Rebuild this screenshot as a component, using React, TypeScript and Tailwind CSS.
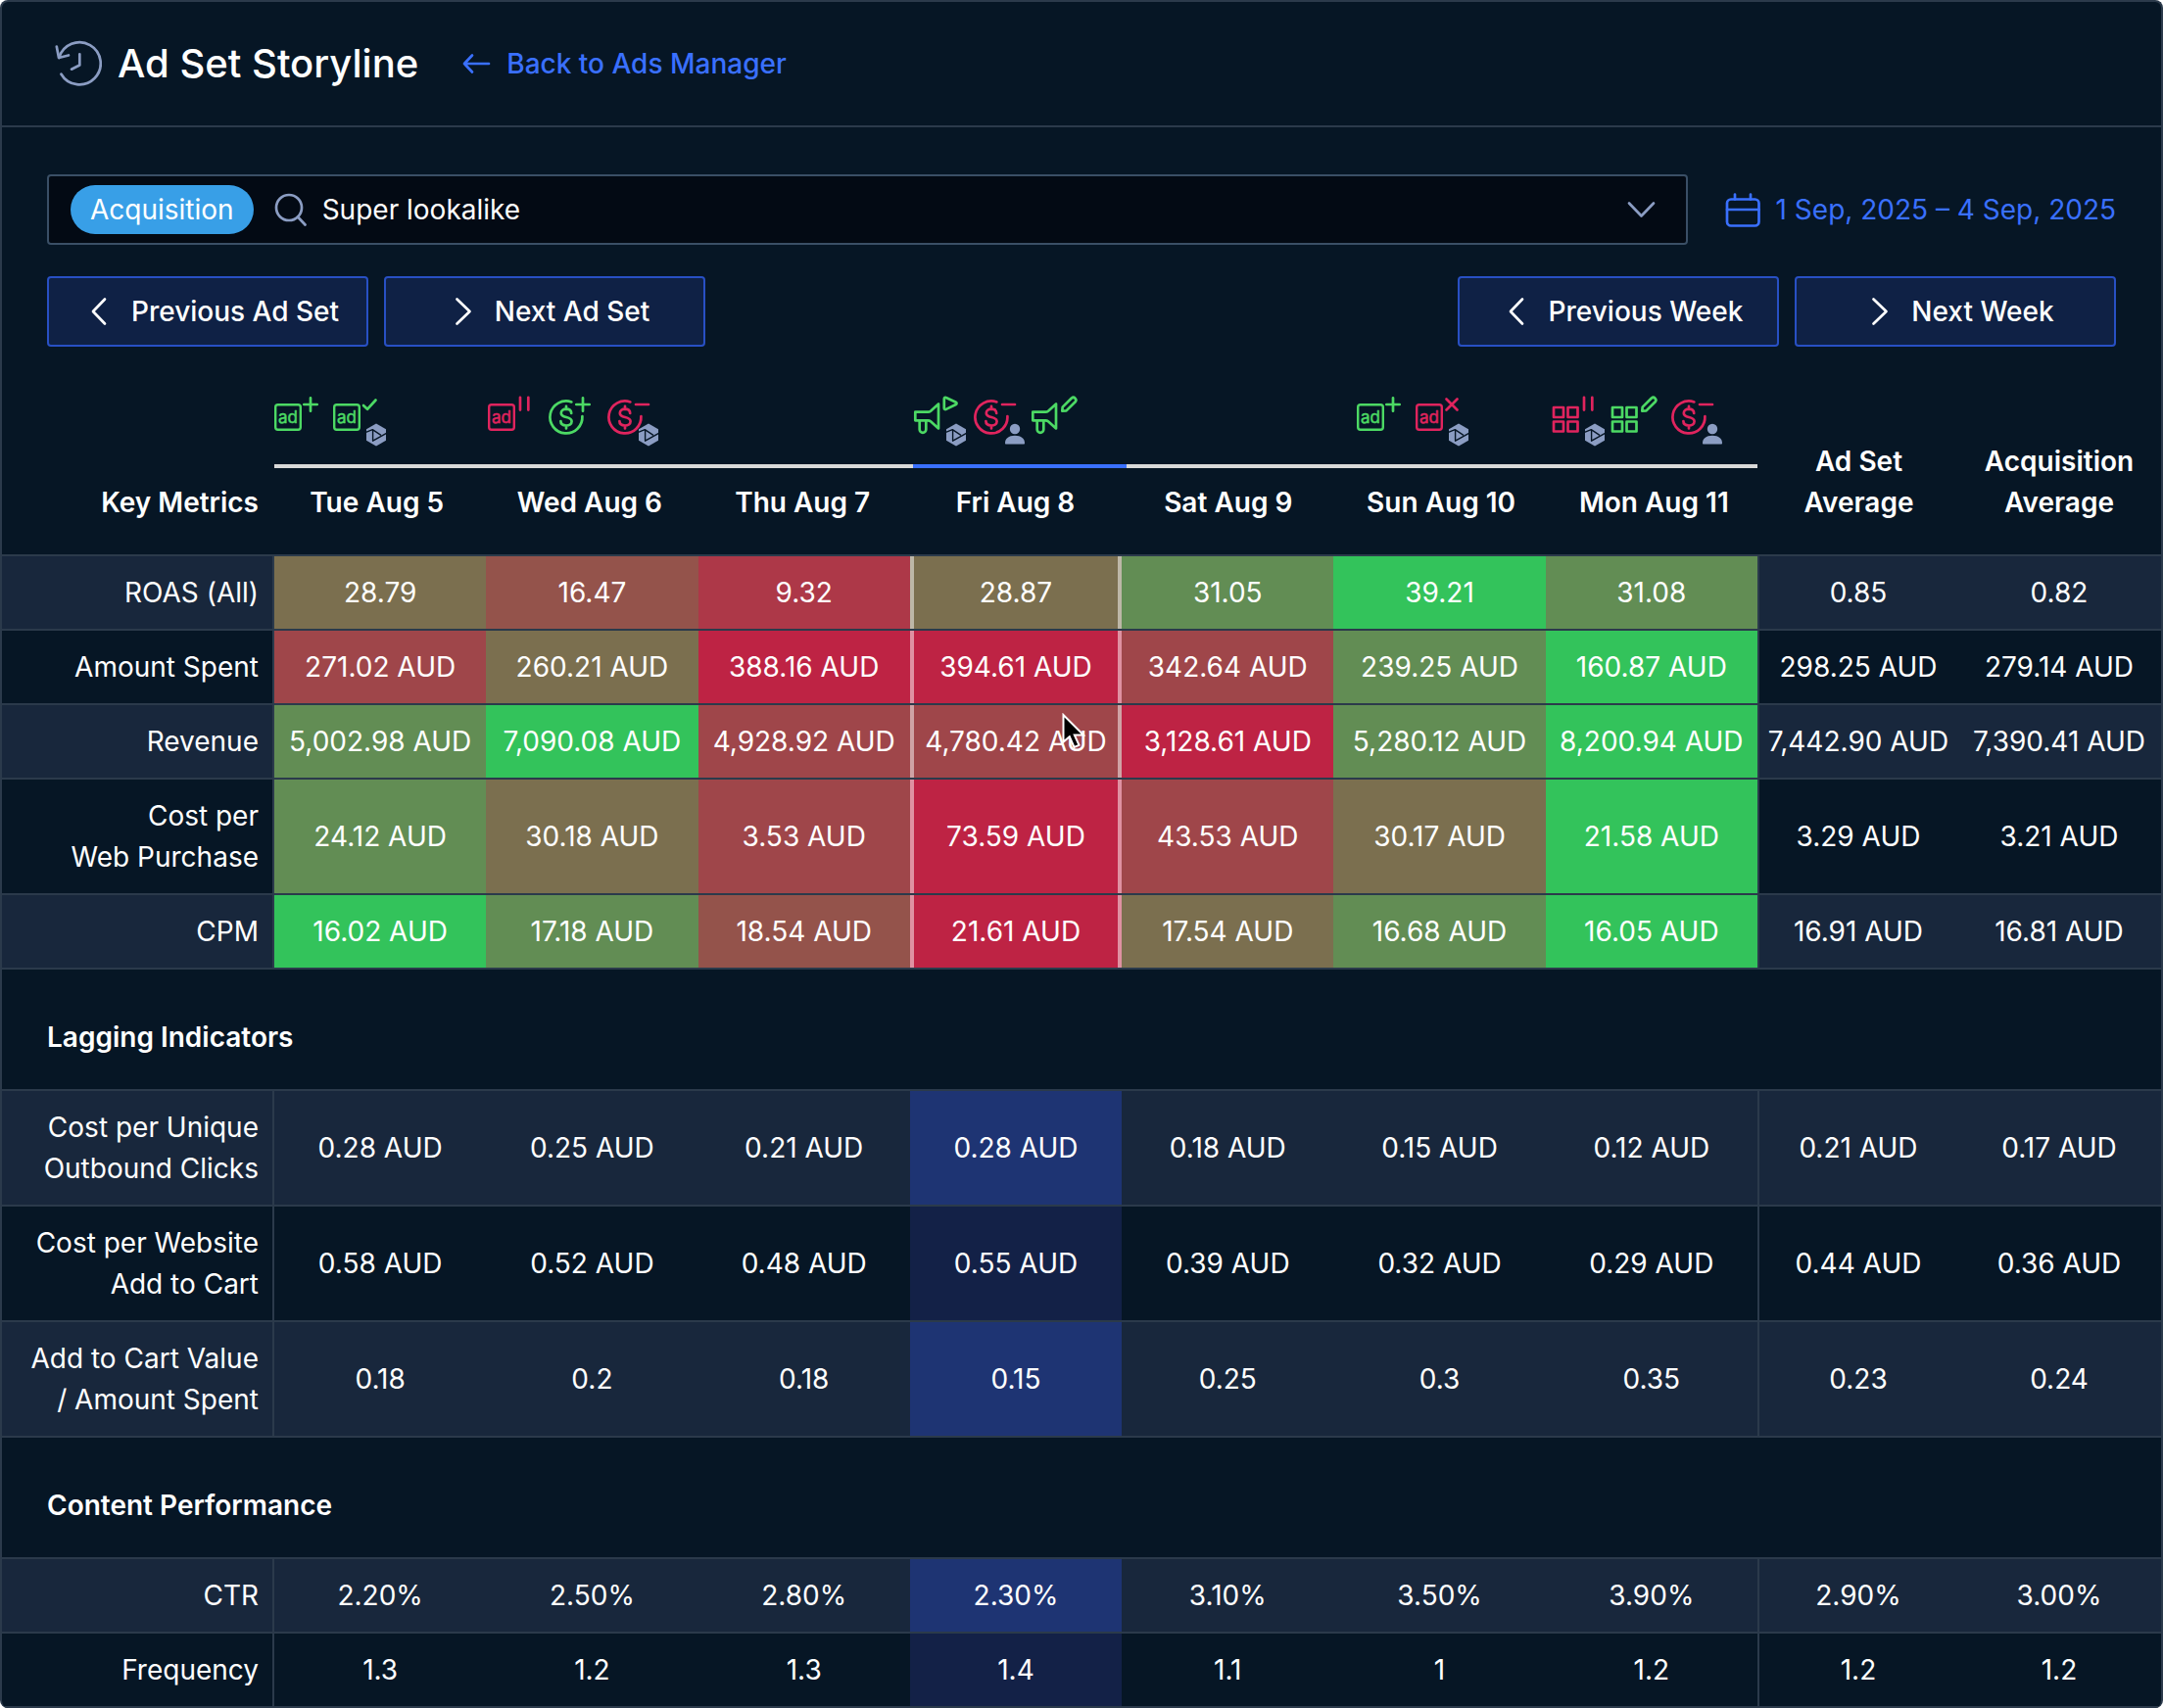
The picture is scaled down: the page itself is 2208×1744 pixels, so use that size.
import type { ReactNode } from "react";
import clsx from "clsx";

const SELECTED_DAY = 3;

const days = ["Tue Aug 5", "Wed Aug 6", "Thu Aug 7", "Fri Aug 8", "Sat Aug 9", "Sun Aug 10", "Mon Aug 11"];

type Shape = "ad" | "budget" | "campaign" | "creative";
type Action = "add" | "check" | "pause" | "remove" | "play" | "edit" | "cross";
type Author = "bot" | "person";
type Tone = "good" | "bad";

interface StoryEvent {
  shape: Shape;
  action: Action;
  tone: Tone;
  author?: Author;
}

const timeline: { events: StoryEvent[]; className?: string }[] = [
  {
    events: [
      { shape: "ad", action: "add", tone: "good" },
      { shape: "ad", action: "check", tone: "good", author: "bot" },
    ],
  },
  {
    events: [
      { shape: "ad", action: "pause", tone: "bad" },
      { shape: "budget", action: "add", tone: "good" },
      { shape: "budget", action: "remove", tone: "bad", author: "bot" },
    ],
  },
  { events: [] },
  {
    events: [
      { shape: "campaign", action: "play", tone: "good", author: "bot" },
      { shape: "budget", action: "remove", tone: "bad", author: "person" },
      { shape: "campaign", action: "edit", tone: "good" },
    ],
  },
  { events: [] },
  {
    className: "pl-5",
    events: [
      { shape: "ad", action: "add", tone: "good" },
      { shape: "ad", action: "cross", tone: "bad", author: "bot" },
    ],
  },
  {
    className: "pl-1",
    events: [
      { shape: "creative", action: "pause", tone: "bad", author: "bot" },
      { shape: "creative", action: "edit", tone: "good" },
      { shape: "budget", action: "remove", tone: "bad", author: "person" },
    ],
  },
];

// heat scale, from best to worst
const heat: Record<string, string> = {
  a: "bg-[#33c35b]",
  b: "bg-[#628d54]",
  c: "bg-[#7b6f4f]",
  d: "bg-[#94534b]",
  e: "bg-[#9f464a]",
  f: "bg-[#ad3848]",
  g: "bg-[#be2344]",
};

interface Metric {
  label: string[];
  values: string[];
  averages: string[];
  heat?: string;
}

const keyMetrics: Metric[] = [
  {
    label: ["ROAS (All)"],
    values: ["28.79", "16.47", "9.32", "28.87", "31.05", "39.21", "31.08"],
    averages: ["0.85", "0.82"],
    heat: "cdfcbab",
  },
  {
    label: ["Amount Spent"],
    values: ["271.02 AUD", "260.21 AUD", "388.16 AUD", "394.61 AUD", "342.64 AUD", "239.25 AUD", "160.87 AUD"],
    averages: ["298.25 AUD", "279.14 AUD"],
    heat: "ecggeba",
  },
  {
    label: ["Revenue"],
    values: [
      "5,002.98 AUD",
      "7,090.08 AUD",
      "4,928.92 AUD",
      "4,780.42 AUD",
      "3,128.61 AUD",
      "5,280.12 AUD",
      "8,200.94 AUD",
    ],
    averages: ["7,442.90 AUD", "7,390.41 AUD"],
    heat: "baeegba",
  },
  {
    label: ["Cost per", "Web Purchase"],
    values: ["24.12 AUD", "30.18 AUD", "3.53 AUD", "73.59 AUD", "43.53 AUD", "30.17 AUD", "21.58 AUD"],
    averages: ["3.29 AUD", "3.21 AUD"],
    heat: "bcegeca",
  },
  {
    label: ["CPM"],
    values: ["16.02 AUD", "17.18 AUD", "18.54 AUD", "21.61 AUD", "17.54 AUD", "16.68 AUD", "16.05 AUD"],
    averages: ["16.91 AUD", "16.81 AUD"],
    heat: "abdgcba",
  },
];

const laggingIndicators: Metric[] = [
  {
    label: ["Cost per Unique", "Outbound Clicks"],
    values: ["0.28 AUD", "0.25 AUD", "0.21 AUD", "0.28 AUD", "0.18 AUD", "0.15 AUD", "0.12 AUD"],
    averages: ["0.21 AUD", "0.17 AUD"],
  },
  {
    label: ["Cost per Website", "Add to Cart"],
    values: ["0.58 AUD", "0.52 AUD", "0.48 AUD", "0.55 AUD", "0.39 AUD", "0.32 AUD", "0.29 AUD"],
    averages: ["0.44 AUD", "0.36 AUD"],
  },
  {
    label: ["Add to Cart Value", "/ Amount Spent"],
    values: ["0.18", "0.2", "0.18", "0.15", "0.25", "0.3", "0.35"],
    averages: ["0.23", "0.24"],
  },
];

const contentPerformance: Metric[] = [
  {
    label: ["CTR"],
    values: ["2.20%", "2.50%", "2.80%", "2.30%", "3.10%", "3.50%", "3.90%"],
    averages: ["2.90%", "3.00%"],
  },
  {
    label: ["Frequency"],
    values: ["1.3", "1.2", "1.3", "1.4", "1.1", "1", "1.2"],
    averages: ["1.2", "1.2"],
  },
];

const shapes: Record<Shape, ReactNode> = {
  ad: (
    <>
      <rect x="1.2" y="9.2" width="25.6" height="25.6" rx="2.5" strokeWidth="2.4" />
      <text x="14" y="28" textAnchor="middle" fontSize="17" fill="currentColor" strokeWidth="0.5">
        ad
      </text>
    </>
  ),
  budget: (
    <>
      <path d="M36.4 21a16.5 16.5 0 1 1-11-14.6" />
      <path d="M25.2 18c0-2.7-2.2-4.3-5.2-4.3s-5.2 1.6-5.2 4.2c0 5.6 10.8 2.7 10.8 8.4 0 2.6-2.4 4.2-5.6 4.2s-5.6-1.6-5.6-4.4M20 10.8v3M20 30.5v3" />
    </>
  ),
  campaign: (
    <>
      <path d="M2.3 16.7h13c1 0 2-.4 2.7-1l8-7.2v25l-8-7.2c-.7-.6-1.7-1-2.7-1h-13z" />
      <path d="M6.7 25.5v9a3.3 3.3 0 0 0 6.6 0v-9" />
    </>
  ),
  creative: (
    <>
      <rect x="2" y="12" width="10" height="10" />
      <rect x="16.5" y="12" width="10" height="10" />
      <rect x="2" y="26.5" width="10" height="10" />
      <rect x="16.5" y="26.5" width="10" height="10" />
    </>
  ),
};

const actions: Record<Action, string> = {
  add: "M37 2.3v13.4M30.3 9h13.4",
  check: "M31 10l4 3.8 8.500-9.300",
  pause: "M33 1.8v12.8M41.3 1.8v12.8",
  remove: "M31 9h13",
  play: "M31.8 3.2c0-1.2 1-1.7 2-1.2l10 4.7c1 .5 1 1.8 0 2.3l-10 4.9c-1 .5-2 0-2-1.2z",
  edit: "M32.3 15.7l.4-4.1 9.2-9.1a2.7 2.7 0 0 1 3.8 3.8l-9.2 9.1z",
  cross: "M31.5 3.5l11 11M42.5 3.5l-11 11",
};

function AuthorBadge({ author }: { author: Author }) {
  if (author === "person") {
    return (
      <g className="text-[#8b9dc3]" fill="currentColor" stroke="none">
        <circle cx="44" cy="34" r="5.2" />
        <path d="M34 48.5C34 44 37.5 40.800 44 40.8s10 3.2 10 7.7c0 .6-.4 1-1 1H35c-.6 0-1-.4-1-1z" />
      </g>
    );
  }
  return (
    <g className="text-[#8b9dc3]" stroke="none">
      <path fill="currentColor" d="M44 28.5l10 5.7v11.6l-10 5.7-10-5.7V34.2z" />
      <path
        className="stroke-[#061625]"
        strokeWidth="1.4"
        strokeLinecap="butt"
        d="M33.5 37.3l6.8-2.6 8.6 5.6M40.6 34.7v11.5l13.9-7.9"
      />
    </g>
  );
}

function EventIcon({ shape, action, tone, author }: StoryEvent) {
  return (
    <svg
      viewBox="0 0 60 52"
      fill="none"
      stroke="currentColor"
      strokeWidth="2.7"
      strokeLinecap="round"
      strokeLinejoin="round"
      className={clsx("h-13 w-15 shrink-0", tone === "good" ? "text-[#4cd964]" : "text-[#e0245e]")}
    >
      {shapes[shape]}
      <path d={actions[action]} />
      {author && <AuthorBadge author={author} />}
    </svg>
  );
}

function HistoryIcon() {
  return (
    <svg
      viewBox="0 0 48 48"
      fill="none"
      stroke="currentColor"
      strokeWidth="2.7"
      strokeLinecap="round"
      strokeLinejoin="round"
      className="size-12 text-[#8b9dc3]"
    >
      <path d="M1.8 6.5L4 18l10-2.5" />
      <path d="M4.3 18A21.6 21.6 0 1 1 6.5 34.7" />
      <path d="M25.3 14.3v11.2L17 29.7" />
    </svg>
  );
}

function Chevron({ d, className }: { d: string; className?: string }) {
  return (
    <svg
      viewBox="0 0 32 32"
      fill="none"
      stroke="currentColor"
      strokeWidth="2.7"
      strokeLinecap="round"
      strokeLinejoin="round"
      className={clsx("size-8 shrink-0", className)}
    >
      <path d={d} />
    </svg>
  );
}

function NavButton({ direction, children }: { direction: "previous" | "next"; children: ReactNode }) {
  return (
    <button
      type="button"
      className="flex h-18 w-[328px] items-center justify-center gap-[22px] rounded-sm border-2 border-[#2850c4] bg-[#0f2145] pl-0.5 font-medium"
    >
      <Chevron d={direction === "previous" ? "M27 3.5L15 16l12 12.5" : "M15.5 3.5L28.5 16l-13 12.5"} />
      {children}
    </button>
  );
}

function Cursor() {
  return (
    <svg viewBox="0 0 26 38" className="absolute top-2 left-[151px] h-[38px] w-[26px]">
      <path d="M1.5 2v27.5l6.3-5.3 4.7 10.8 5-2.2-4.7-10.3H22z" fill="#000" stroke="#fff" strokeWidth="2" />
    </svg>
  );
}

function MetricRow({ metric }: { metric: Metric }) {
  return (
    <tr className="group grid grid-cols-[278px_repeat(7,minmax(0,1fr))_204px_208px] border-b-2 border-[#2b3a4b] odd:bg-[#18273c]">
      <th scope="row" className="border-r-2 border-[#2b3a4b] py-4 pr-3.5 text-right font-normal">
        {metric.label.map((line) => (
          <span key={line} className="block">
            {line}
          </span>
        ))}
      </th>
      {metric.values.map((value, i) => {
        const selected = i === SELECTED_DAY;
        return (
          <td
            key={i}
            className={clsx(
              "relative flex items-center justify-center whitespace-nowrap",
              metric.heat && heat[metric.heat[i]],
              selected && metric.heat && "border-x-4 border-white/50",
              selected && !metric.heat && "bg-[#132147] group-odd:bg-[#1e3473]",
            )}
          >
            {value}
            {selected && metric.label[0] === "Revenue" && <Cursor />}
          </td>
        );
      })}
      {metric.averages.map((value, i) => (
        <td
          key={i}
          className={clsx(
            "flex items-center justify-center whitespace-nowrap",
            i === 0 && "border-l-2 border-[#2b3a4b]",
          )}
        >
          {value}
        </td>
      ))}
    </tr>
  );
}

function Section({ title, metrics }: { title?: string; metrics: Metric[] }) {
  return (
    <>
      {title && (
        <tbody className="block">
          <tr className="block border-b-2 border-[#2b3a4b]">
            <th scope="rowgroup" colSpan={10} className="block px-[46px] pt-12 pb-8 text-left font-semibold">
              {title}
            </th>
          </tr>
        </tbody>
      )}
      <tbody className="block">
        {metrics.map((metric) => (
          <MetricRow key={metric.label[0]} metric={metric} />
        ))}
      </tbody>
    </>
  );
}

export default function App() {
  return (
    <main className="overflow-hidden rounded-lg border-2 border-b-0 border-[#2b3a4b] bg-[#061625] font-['Inter',sans-serif] text-[28px] leading-[42px] text-white">
      <header className="flex h-32 items-center border-b-2 border-[#2b3a4b] pl-[54px]">
        <HistoryIcon />
        <h1 className="ml-4 text-[40px] font-medium">Ad Set Storyline</h1>
        <a href="#ads-manager" className="ml-11 flex items-center gap-4 font-medium text-[#3a70ff]">
          <svg
            viewBox="0 0 30 24"
            fill="none"
            stroke="currentColor"
            strokeWidth="2.7"
            strokeLinecap="round"
            strokeLinejoin="round"
            className="h-6 w-[30px]"
          >
            <path d="M28 12H3M11 3.5L3 12l8 8.5" />
          </svg>
          Back to Ads Manager
        </a>
      </header>

      <div className="flex flex-col gap-8 px-[46px] pt-12">
        <div className="flex items-center">
          <div className="flex h-18 flex-1 items-center rounded-sm border-2 border-[#3a4f66] bg-[#030a14] pr-[30px] pl-[22px]">
            <span className="flex h-[50px] items-center rounded-full bg-[#389fe7] px-5">Acquisition</span>
            <label htmlFor="ad-set" aria-label="Ad set" className="ml-[18px]">
              <svg
                viewBox="0 0 36 36"
                fill="none"
                stroke="currentColor"
                strokeWidth="2.7"
                strokeLinecap="round"
                className="size-9 text-[#8b9dc3]"
              >
                <circle cx="18" cy="16" r="13" />
                <path d="M27 25.5l7.5 8" />
              </svg>
            </label>
            <input
              id="ad-set"
              type="text"
              defaultValue="Super lookalike"
              className="ml-4 min-w-0 flex-1 bg-transparent outline-none"
            />
            <button type="button" aria-label="Show ad sets">
              <Chevron d="M4 9.5L16.5 22.500 29 9.5" className="text-[#8b9dc3]" />
            </button>
          </div>
          <button type="button" className="ml-9 flex items-center gap-3.5 text-[#3a70ff]">
            <svg
              viewBox="0 0 40 40"
              fill="none"
              stroke="currentColor"
              strokeWidth="2.7"
              strokeLinecap="round"
              className="size-10"
            >
              <rect x="4" y="9.5" width="32.5" height="27" rx="4" />
              <path d="M4 20h32.5M12 4.5v5M28 4.5v5" />
            </svg>
            1 Sep, 2025 – 4 Sep, 2025
          </button>
        </div>
        <div className="flex justify-between">
          <div className="flex gap-4">
            <NavButton direction="previous">Previous Ad Set</NavButton>
            <NavButton direction="next">Next Ad Set</NavButton>
          </div>
          <div className="flex gap-4">
            <NavButton direction="previous">Previous Week</NavButton>
            <NavButton direction="next">Next Week</NavButton>
          </div>
        </div>
      </div>

      <table className="block">
        <thead className="block">
          <tr className="grid grid-cols-[274px_repeat(7,minmax(0,1fr))_201px_208px] items-end border-b-2 border-[#2b3a4b] pt-[50px] pb-8">
            <td
              colSpan={7}
              className="col-span-7 col-start-2 row-start-1 mr-[3px] mb-3.5 ml-1 grid grid-cols-[218fr_217fr_217fr_218fr_215fr_215fr_214fr]"
            >
              {timeline.map(({ events, className }, i) => (
                <div
                  key={days[i]}
                  className={clsx(
                    "flex h-[74px] border-b-4",
                    i === SELECTED_DAY ? "border-[#3a70ff]" : "border-[#d9d9d9]",
                    className,
                  )}
                >
                  {events.map((event, j) => (
                    <EventIcon key={j} {...event} />
                  ))}
                </div>
              ))}
            </td>
            <th scope="col" className="row-start-2 pr-3 text-right font-semibold">
              Key Metrics
            </th>
            {days.map((day) => (
              <th key={day} scope="col" className="row-start-2 text-center font-semibold">
                {day}
              </th>
            ))}
            <th scope="col" className="col-start-9 row-span-2 row-start-1 text-center font-semibold">
              Ad Set
              <br />
              Average
            </th>
            <th scope="col" className="col-start-10 row-span-2 row-start-1 text-center font-semibold">
              Acquisition
              <br />
              Average
            </th>
          </tr>
        </thead>
        <Section metrics={keyMetrics} />
        <Section title="Lagging Indicators" metrics={laggingIndicators} />
        <Section title="Content Performance" metrics={contentPerformance} />
      </table>
    </main>
  );
}
